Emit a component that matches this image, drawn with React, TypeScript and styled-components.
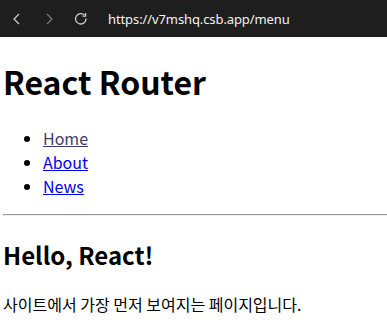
import React from 'react';
import styled, { createGlobalStyle } from 'styled-components';

const GlobalStyle = createGlobalStyle`
  html, body {
    margin: 0;
    padding: 0;
    background: #ffffff;
    overflow: hidden;
  }
`;

const Frame = styled.div`
  width: 387px;
  height: 335px;
  overflow: hidden;
  display: flex;
  flex-direction: column;
`;

const AddressBar = styled.header`
  height: 37px;
  flex: none;
  background: #1e1e1e;
  display: flex;
  align-items: center;
  padding-left: 9px;
`;

const NavButton = styled.span<{ dim?: boolean }>`
  width: 16px;
  height: 16px;
  margin-right: 16px;
  display: flex;
  align-items: center;
  justify-content: center;
  color: ${props => (props.dim ? '#7a7a7a' : '#cfcfcf')};
`;

const Url = styled.span`
  margin-left: 3px;
  color: #f2f2f2;
  font-family: 'Noto Sans', sans-serif;
  font-size: 13px;
  letter-spacing: -0.1px;
`;

const Page = styled.main`
  padding: 0 0 0 3px;
  font-family: 'Noto Sans CJK KR', 'Noto Sans', sans-serif;
  font-size: 16px;
  color: #000;
`;

const Title = styled.h1`
  font-size: 32px;
  font-weight: 700;
  margin: 21px 0 22px;
`;

const Menu = styled.ul`
  margin: 16px 0;
  padding-left: 40px;
`;

const MenuLink = styled.a<{ visited?: boolean }>`
  color: ${props => (props.visited ? '#3f3a6e' : '#0000ee')};
  text-decoration: underline;
`;

const Rule = styled.hr`
  margin: 8px 0 7px;
  width: 400px;
  border: none;
  border-top: 1px solid #9a9a9a;
  border-bottom: 1px solid #eeeeee;
`;

const Heading = styled.h2`
  font-size: 24px;
  font-weight: 700;
  margin: 21px 0 20px;
`;

const Text = styled.p`
  margin: 16px 0;
`;

const Back = () => (
  <svg width="16" height="16" viewBox="0 0 16 16" fill="none" stroke="currentColor" strokeWidth="1.2">
    <path d="M10 3 L5 8 L10 13" />
  </svg>
);

const Forward = () => (
  <svg width="16" height="16" viewBox="0 0 16 16" fill="none" stroke="currentColor" strokeWidth="1.2">
    <path d="M6 3 L11 8 L6 13" />
  </svg>
);

const Reload = () => (
  <svg width="16" height="16" viewBox="0 0 16 16" fill="none" stroke="currentColor" strokeWidth="1.3">
    <path d="M13 7.5 A5.2 5.2 0 1 1 11.4 4" />
    <path d="M12.6 2 V5.2 H9.4" />
  </svg>
);

const links = [
  { label: 'Home', visited: true },
  { label: 'About', visited: false },
  { label: 'News', visited: false },
];

export default function App() {
  return (
    <Frame>
      <GlobalStyle />
      <AddressBar>
        <NavButton>
          <Back />
        </NavButton>
        <NavButton dim>
          <Forward />
        </NavButton>
        <NavButton>
          <Reload />
        </NavButton>
        <Url>https://v7mshq.csb.app/menu</Url>
      </AddressBar>
      <Page>
        <Title>React Router</Title>
        <Menu>
          {links.map(l => (
            <li key={l.label}>
              <MenuLink href="#" visited={l.visited}>
                {l.label}
              </MenuLink>
            </li>
          ))}
        </Menu>
        <Rule />
        <Heading>Hello, React!</Heading>
        <Text>사이트에서 가장 먼저 보여지는 페이지입니다.</Text>
      </Page>
    </Frame>
  );
}
